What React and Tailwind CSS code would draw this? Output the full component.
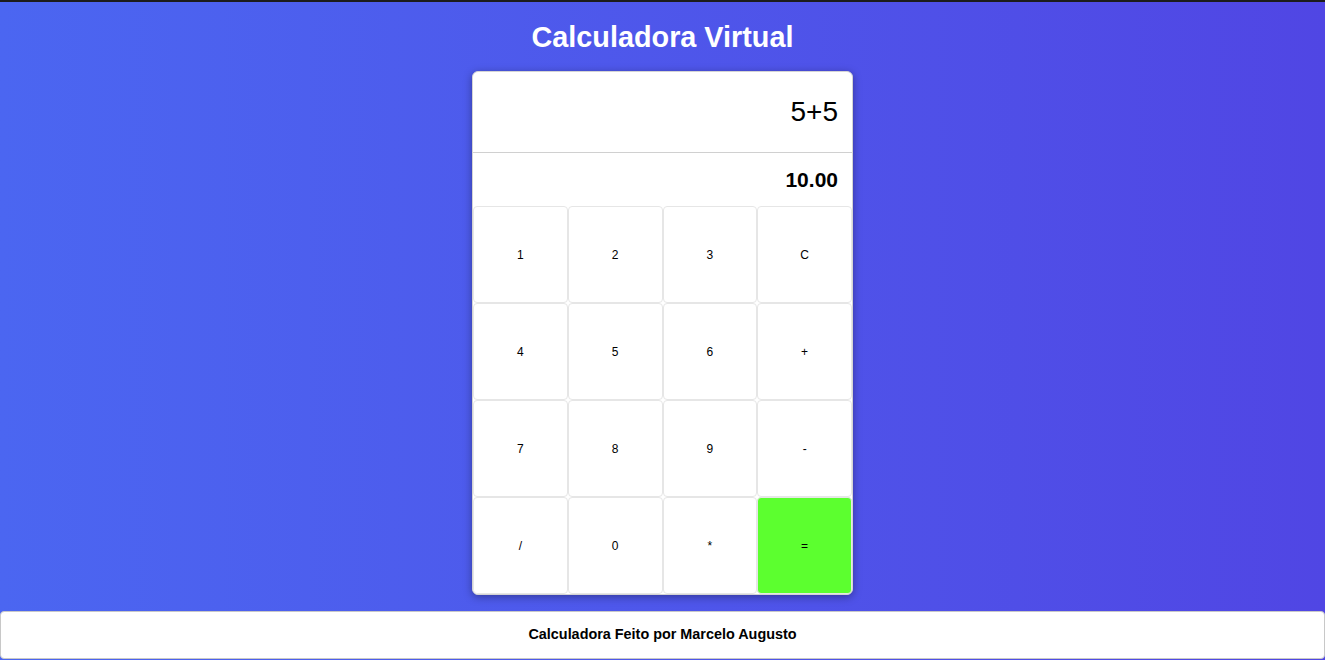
import React from 'react';

const keys = ['1', '2', '3', 'C', '4', '5', '6', '+', '7', '8', '9', '-', '/', '0', '*', '='];

export default function App() {
    return (
        <div className="min-h-[660px] flex flex-col items-center border-t-2 border-[#1c1c1c] bg-gradient-to-r from-[#4b66f1] to-[#5046e4] font-['Liberation_Sans',Arial,sans-serif]">
            {/* Title */}
            <h1 className="mt-[17px] h-[36px] text-[28.8px] leading-[36px] font-bold text-white">Calculadora Virtual</h1>

            {/* Calculator card */}
            <div className="mt-[16px] w-[381px] bg-white rounded-[6px] border border-[#d4d4d4] shadow-[0_2px_8px_rgba(0,0,0,0.35)] overflow-hidden">
                <div className="h-[80px] flex items-center justify-end px-[14px] text-[28px] text-black">5+5</div>
                <div className="border-t border-[#d0d0d0] h-[54px] flex items-center justify-end px-[14px] text-[21px] font-bold text-black">10.00</div>
                <div className="grid grid-cols-4">
                    {keys.map((k) => (
                        <button
                            key={k}
                            className={`h-[97px] rounded-[4px] border border-[#e6e6e6] text-[12px] text-black ${k === '=' ? 'bg-[#5cff2f] border-[#5cff2f]' : 'bg-white'}`}
                        >
                            {k}
                        </button>
                    ))}
                </div>
            </div>

            {/* Footer */}
            <footer className="mt-[16px] w-full h-[48px] bg-white rounded-[4px] border border-[#c8c8c8] flex items-center justify-center text-[14.4px] font-bold text-black">
                Calculadora Feito por Marcelo Augusto
            </footer>
        </div>
    );
}
